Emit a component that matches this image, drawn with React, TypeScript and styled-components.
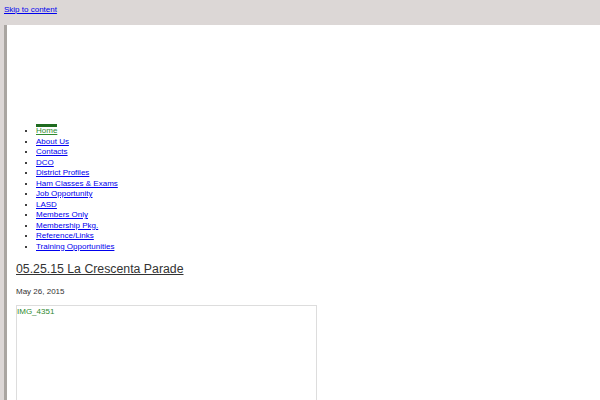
import styled, { createGlobalStyle } from "styled-components";

const GlobalStyle = createGlobalStyle`
  html, body {
    margin: 0;
    padding: 0;
    background-color: #dcd7d6;
    font-family: "Liberation Sans", Arial, sans-serif;
  }
`

const TopBar = styled.div`
  height: 25px;
  padding: 5px 4px 0;
  box-sizing: border-box;
  font-size: 8px;
  line-height: 10px;

  a {
    color: #0000ee;
  }
`

const Page = styled.div`
  margin-left: 4px;
  border-left: 3px solid #a9a5a1;
  background-color: #fff;
  height: 375px;
  overflow: hidden;
`

const Header = styled.div`
  height: 99px;
`

const NavList = styled.ul`
  margin: 0;
  padding: 0 0 0 29px;
  font-size: 8px;
  line-height: 10.5px;
  list-style: disc;
`

const NavItem = styled.li<{ $active?: boolean }>`
  a {
    color: ${p => (p.$active ? "#2f8a2f" : "#0000ee")};
    display: inline-block;
    border-top: ${p => (p.$active ? "3px solid #1f6b1f" : "none")};
    line-height: ${p => (p.$active ? "8px" : "10.5px")};
  }
`

const Content = styled.main`
  padding: 9px 0 0 9px;
`

const PostTitle = styled.h2`
  margin: 0;
  font-size: 12.3px;
  line-height: 16px;
  font-weight: normal;

  a {
    color: #333;
  }
`

const PostDate = styled.p`
  margin: 10px 0 0;
  font-size: 8px;
  line-height: 10px;
  color: #333;
`

const ImageBox = styled.div`
  margin-top: 8px;
  width: 299px;
  height: 120px;
  border: 1px solid #ddd;
  font-size: 8px;
  line-height: 10px;
  color: #2f8a2f;
  padding-top: 1px;
`

const links = [
  "Home",
  "About Us",
  "Contacts",
  "DCO",
  "District Profiles",
  "Ham Classes & Exams",
  "Job Opportunity",
  "LASD",
  "Members Only",
  "Membership Pkg.",
  "Reference/Links",
  "Training Opportunities",
]

export default function App(): JSX.Element {
  return (
    <>
      <GlobalStyle />
      <TopBar>
        <a href="#content">Skip to content</a>
      </TopBar>
      <Page>
        <Header />
        <NavList>
          {links.map((l, i) => (
            <NavItem key={l} $active={i === 0}>
              <a href="#">{l}</a>
            </NavItem>
          ))}
        </NavList>
        <Content id="content">
          <PostTitle>
            <a href="#">05.25.15 La Crescenta Parade</a>
          </PostTitle>
          <PostDate>May 26, 2015</PostDate>
          <ImageBox>IMG_4351</ImageBox>
        </Content>
      </Page>
    </>
  )
}
